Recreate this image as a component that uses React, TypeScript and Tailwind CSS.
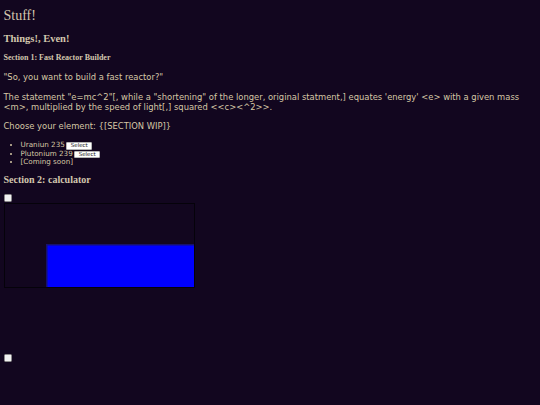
import React from "react";

const serif = { fontFamily: '"Liberation Serif", "Times New Roman", serif' };
const sans = { fontFamily: '"DejaVu Sans", Verdana, sans-serif' };

const elements = [
  { name: "Uraniun 235", selectable: true },
  { name: "Plutonium 239", selectable: true },
  { name: "[Coming soon]", selectable: false },
];

const Box = () => (
  <input
    type="checkbox"
    className="block appearance-none w-[8px] h-[8px] bg-[#f1f1f1] border border-[#8a8a8a] rounded-[1.5px]"
  />
);

const App = () => {
  return (
    <div className="min-h-screen w-full bg-[#12061f] text-[#d6c8a6] px-[3.5px] pt-[6px] overflow-hidden">
      <h1 style={serif} className="text-[14px] leading-[19px] font-normal text-[#d2c6ae]">
        Stuff!
      </h1>
      <h2 style={serif} className="mt-[7px] text-[10.5px] leading-[14px] font-bold text-[#d2c6ae]">
        Things!, Even!
      </h2>
      <h4 style={serif} className="mt-[7px] text-[8px] leading-[9px] font-bold text-[#d2c6ae]">
        Section 1: Fast Reactor Builder
      </h4>

      <div style={sans} className="text-[8.4px] leading-[10px]">
        <p className="mt-[10px]">"So, you want to build a fast reactor?"</p>
        <p className="mt-[10px]">
          The statement "e=mc^2"[, while a "shortening" of the longer, original statment,] equates 'energy'
          &lt;e&gt; with a given mass &lt;m&gt;, multiplied by the speed of light[,] squared &lt;&lt;c&gt;&lt;^2&gt;&gt;.
        </p>
        <p className="mt-[9px]">Choose your element: {"{[SECTION WIP]}"}</p>
      </div>

      <ul style={sans} className="mt-[10px] list-disc pl-[17px] text-[7.2px] leading-[8.7px]">
        {elements.map((el) => (
          <li key={el.name}>
            {el.name}
            {el.selectable && (
              <button className="ml-[1.5px] inline-block align-baseline h-[7.5px] px-[3.5px] bg-white border border-[#b5b5b5] rounded-[1px] text-[#111] text-[5.5px] leading-[5.5px]">
                Select
              </button>
            )}
          </li>
        ))}
      </ul>

      <h3 style={serif} className="mt-[6.5px] text-[10px] leading-[11px] font-bold text-[#d2c6ae]">
        Section 2: calculator
      </h3>

      <div className="mt-[9px]">
        <Box />
      </div>

      <div className="mt-[1.5px] w-[191px] h-[85px] border border-[#05020a]">
        <svg width="189" height="83" viewBox="0 0 189 83" className="block">
          <rect x="41" y="40" width="148" height="43" fill="#1a1aa0" opacity="0.6" />
          <rect x="42.5" y="41.5" width="146.5" height="41.5" fill="#0000ff" />
        </svg>
      </div>

      <div className="mt-[66px]">
        <Box />
      </div>
    </div>
  );
};

export default App;
